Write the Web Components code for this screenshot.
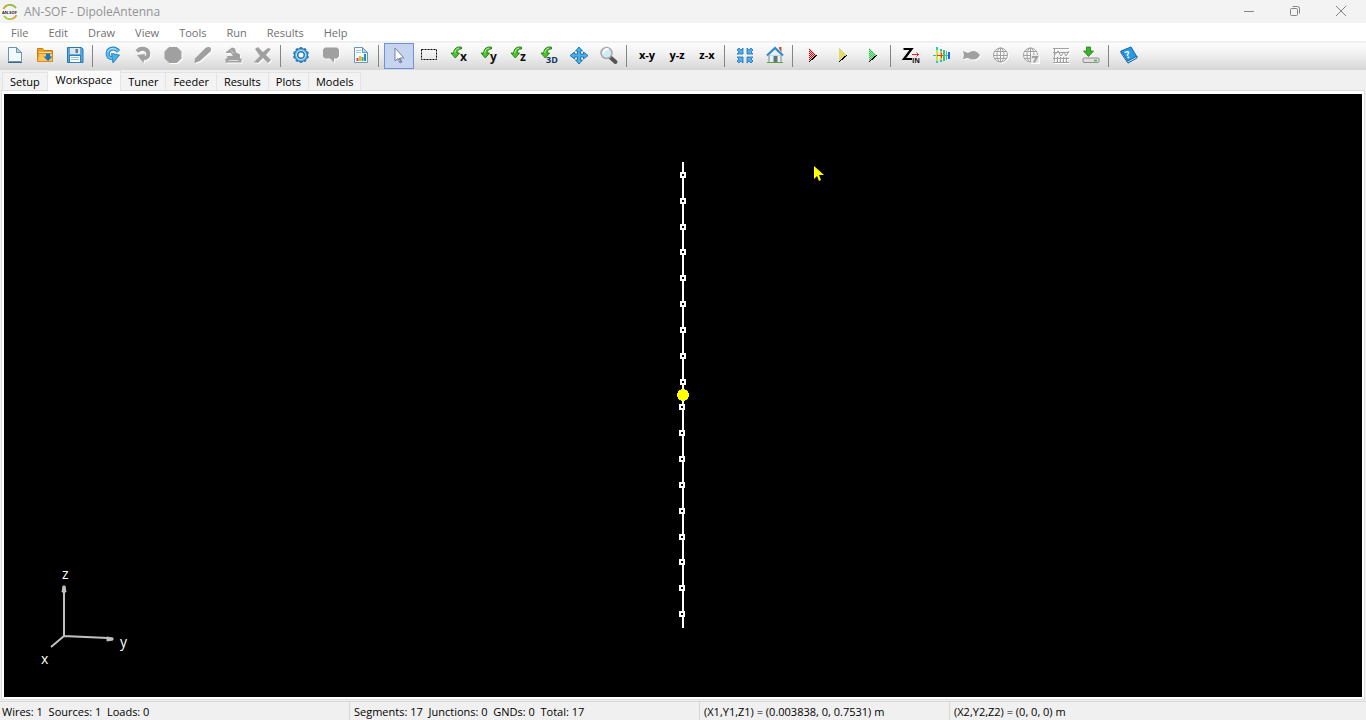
<!DOCTYPE html>
<html lang="en">
<head>
<meta charset="utf-8">
<title>AN-SOF - DipoleAntenna</title>
<style>
html, body { height: 100%; margin: 0; }
body { background: #f0f0f0; font-family: "Open Sans", "Noto Sans", sans-serif; }
</style>
</head>
<body>
<ansof-app></ansof-app>
<script>
const define = (name, html, setup) => {
  const template = document.createElement('template');
  template.innerHTML = html;
  customElements.define(name, class extends HTMLElement {
    constructor() {
      super();
      this.attachShadow({ mode: 'open' }).append(template.content.cloneNode(true));
    }
    connectedCallback() { if (setup) setup(this, this.shadowRoot); }
  });
};

const rotate = `<path d="M12.500 2.200C8 1.200 4.800 3.600 4.700 8H2l4.300 5L10.500 8H8c.2-2.700 1.800-4.200 4.500-4Z" fill="#48c62c" stroke="#20790f" stroke-width=".9"/><path d="M5.800 8C6 5 7.500 3.500 10 3.100" stroke="#b2f194" fill="none"/>`;
const axisText = t => `${rotate}<text x="11" y="16" fill="#111" font-family="Open Sans" font-weight="700" font-size="12">${t}</text>`;
const play = (id, color) => `<g shape-rendering="crispEdges"><defs><pattern id="${id}" width="2" height="2" patternUnits="userSpaceOnUse"><rect width="2" height="2" fill="#d0d0d0"/><path d="M0 0h1v1H0zM1 1h1v1H1z" fill="${color}"/></pattern></defs><path d="M6 3l8 7-8 7z" fill="url(#${id})"/><path d="M14 10l-8 7" stroke="#000"/></g>`;
const globe = `<circle cx="9.500" cy="10" r="7" fill="none" stroke="#a0a0a0"/><ellipse cx="9.500" cy="10" rx="3.500" ry="7" fill="none" stroke="#a0a0a0"/><path d="M9.500 3v14M2.500 10.500h14M3.500 6.500h12M3.500 13.500h12" stroke="#a0a0a0"/>`;
const gearTeeth = Array.from({ length: 10 }, (_, i) => `<rect x="8.500" y="2" width="3" height="4" rx="1" fill="#2c80c4" transform="rotate(${i * 36} 10 10)"/>`).join('');

const icons = {
  new: `<path d="M3.500 2.500h8l5 5v9h-13z" fill="#f1f8fe" stroke="#6f93ab"/><path d="M11.500 2.500v5h5z" fill="#b7d5e8" stroke="#6f93ab"/><path d="M3 17.500h14" stroke="#45677d"/>`,
  open: `<path d="M2.500 3.500h5l2 2h8v11h-15z" fill="#eda024" stroke="#c97d11"/><path d="M4 7.500h12v2" stroke="#ffe2a0" fill="none"/><path d="M2.500 16.500l1-8h14v8z" fill="#ffc459" stroke="#d98d1d"/><path d="M11 8.500h4v3h2.500l-4.500 4.500-4.500-4.500H11z" fill="#1678c5"/>`,
  save: `<path d="M2.500 2.500h14l1.500 1.500v13.500H2.500z" fill="#55a8de" stroke="#2878b0"/><rect x="5" y="3" width="10" height="6" fill="#dfe6ea"/><rect x="10.500" y="4" width="2.500" height="4" fill="#637d8c"/><rect x="4.500" y="10.500" width="11" height="7" fill="#f5fbff" stroke="#3780b2"/><path d="M6 12.500h8M6 14.500h8" stroke="#9fc0d3"/>`,
  undo: `<path d="M15.500 6.500C11.500 1.500 4.500 3.500 4.700 9c.1 2.500 1.800 4 4.300 4.300" stroke="#1f7fc2" stroke-width="4"/><path d="M8.500 8.500l8 1.500-6.500 8z" fill="#4bafe8" stroke="#1772b0" stroke-width=".8"/><path d="M15.500 6.500C11.500 1.500 4.500 3.500 4.700 9c.1 2.500 1.800 4 4.300 4.300" stroke="#5cbbee" stroke-width="2.400"/><path d="M4.500 7c1-3 5-4.500 8.500-2.500" stroke="#c3edff"/>`,
  redo: `<path d="M4 6.500C8 2 15.500 3.500 15.300 9.500c-.1 2-1.800 3.500-4.300 4" stroke="#a0a0a0" stroke-width="4"/><path d="M12 9l-8 1 6.500 8z" fill="#a0a0a0"/>`,
  stop: `<path d="M6 2.500h8l4 4v7l-4 4H6l-4-4v-7z" fill="#a0a0a0" stroke="#a0a0a0" stroke-linejoin="round"/>`,
  pencil: `<path d="M2 13.500L13 2.500q3-1 4.500 0 1 2 0 4L7 16l-5 2-.5-1z" fill="#a0a0a0"/>`,
  stamp: `<path d="M3 7l6-4.500 3 1 1 4 4 2v4h1.500v4h-16v-4h2L4 11h6L8 8H3z" fill="#a0a0a0"/><path d="M5.500 15.500h10M8 5.500l3 3" stroke="#ddd"/>`,
  cross: `<path d="M2 4l3-2 5 5 5-4 3 1-5 6 5 5-3 3-5-5-5 5-4-1 6-6z" fill="#a0a0a0"/>`,
  gear: `${gearTeeth}<circle cx="10" cy="10" r="6.500" fill="#6bbbe9" stroke="#216fab"/><circle cx="10" cy="10" r="4.500" fill="#2a75b2" stroke="#c1e8fa"/><circle cx="10" cy="10" r="2.500" fill="#f6fbff"/>`,
  chat: `<path d="M4 2.500h12l2 2v7l-2 2h-3v4l-4-4H4l-2-2v-7z" fill="#a0a0a0"/>`,
  report: `<path d="M3.500 2.500h8l5 5v10h-13z" fill="#f6fbff" stroke="#6a97b7"/><path d="M11.500 2.500v5h5z" fill="#b7dcef" stroke="#6a97b7"/><path d="M5 5.500h5M5 7.500h5" stroke="#98cce5"/><path d="M6.500 13v3" stroke="#e73f2d" stroke-width="2"/><path d="M9 11v5" stroke="#f1af29" stroke-width="2"/><path d="M11.500 12v4" stroke="#47af44" stroke-width="2"/><path d="M14 9v7" stroke="#238ad0" stroke-width="2"/>`,
  select: `<path d="M6 3v13l3-2.500 2 4.500 2-1-2-4h4z" fill="#fff" stroke="#70849a"/><path d="M10 13l2 4" stroke="#56708a"/>`,
  box: `<rect x="2.500" y="4.500" width="15" height="10" fill="none" stroke="#000" stroke-dasharray="2 1"/>`,
  rx: axisText('x'), ry: axisText('y'), rz: axisText('z'),
  r3: `${rotate}<text x="7" y="18" fill="#123759" font-family="Open Sans" font-weight="700" font-size="9">3D</text>`,
  move: `<path d="M10 2l3.500 4H11.500v3h3V7L19 10.500 14.500 14v-2h-3v3h2L10 19l-3.500-4h2v-3h-3v2L1 10.500 5.500 7v2h3V6h-2z" fill="#4aaee9" stroke="#1b6ead" stroke-width=".9"/>`,
  zoom: `<path d="M11.500 12.500l5 4.500" stroke="#555" stroke-width="4" stroke-linecap="round"/><circle cx="7.500" cy="8" r="5.500" fill="#cdebf5" stroke="#a8a8a8" stroke-width="1.500"/><path d="M4.500 8.500c0-3 2-4.500 5-4.500" fill="none" stroke="#fff" stroke-width="2"/>`,
  fit: `<path d="M2 5l2-2 2 2 2-2v6H2l2-2zM18 5l-2-2-2 2-2-2v6h6l-2-2zM2 16l2 2 2-2 2 2v-6H2l2 2zM18 16l-2 2-2-2-2 2v-6h6l-2 2z" fill="#4cb0eb" stroke="#2070b0" stroke-width=".8"/>`,
  home: `<path d="M14 3.500V2h2.500v5.500" fill="#bb5740"/><path d="M4 10h12v7.500H4z" fill="#e8f0f4" stroke="#6e8ca1"/><path d="M2 10.500L10 3l8 7.500" fill="#e8f0f4" stroke="#2c8acb" stroke-width="2.200"/><path d="M8.500 11h4v6.500h-4z" fill="#66727b"/><path d="M2 17.500h16" stroke="#5ba53d"/>`,
  red: play('playRed', '#f00000'), yellow: play('playYellow', '#f5e800'), green: play('playGreen', '#00df22'),
  zin: `<path d="M2.500 4h8L3 14h8" fill="none" stroke="#000" stroke-width="2.200"/><path d="M11 9.500h7M15.500 7.500l2 2-2 2" stroke="#e52222" fill="none"/><text x="11" y="18" fill="#111" font-family="Open Sans" font-weight="700" font-size="7">IN</text>`,
  pattern: `<g shape-rendering="crispEdges" stroke-width="2"><path d="M2 10.500h17" stroke="#20bce0" stroke-width="1"/><path d="M6 2v16" stroke="#22c8e0"/><path d="M6 5v11" stroke="#c8e828"/><path d="M10 4v13" stroke="#1fb8dd"/><path d="M10 6v9" stroke="#f3c428"/><path d="M10 8v5M6 10.500h7" stroke="#f03a29" stroke-width="1"/><path d="M13 5v11" stroke="#35c86a"/><path d="M15.500 6v9" stroke="#30c4c0" stroke-width="1"/><path d="M18 7v7" stroke="#2664e0"/></g>`,
  fish: `<path d="M2 6l5 2q6-4 10 0l2 2-2 3q-5 3-10 0l-5 1 1-4z" fill="#a0a0a0"/>`,
  globe: globe,
  globe2: `${globe}<path d="M10 10h8v8h-8z" fill="#e8e8e8"/><path d="M11 12h5l-3 5.500" fill="none" stroke="#a0a0a0" stroke-width="2"/>`,
  spectrum: `<path d="M2 3.500h16M2 7.500h16M2 13.500h16M2 17.500h16" stroke="#a0a0a0"/><path d="M3.500 4v12M6.500 12v6M9.500 12v6M12.500 12v6M15.500 12v6M3 11l4-5 3 5 3-4 2 4 3-5" stroke="#a0a0a0" fill="none"/>`,
  download: `<path d="M3.500 10l-2 3h17l-2-3z" fill="#eee"/><rect x="2" y="13" width="16" height="4.500" rx="1" fill="#ddd" stroke="#8f8f8f"/><path d="M13 15.500h3" stroke="#38bd3a" stroke-width="1.500"/><path d="M5.500 2h4v4h3l-5 5.500-5-5.500h3z" fill="#39b42a" stroke="#217c18" stroke-width=".8"/>`,
  help: `<path d="M2 6l10-4 6 10-9 6z" fill="#279be8" stroke="#1464a6"/><path d="M2 6v2l7 10 9-5v-2l-9 5z" fill="#d6e5ed" stroke="#1464a6"/><text x="6" y="13" fill="#fff" font-family="Open Sans" font-weight="700" font-size="10" transform="rotate(-20 9 9)">?</text>`
};

define('tool-button', `
<style>
:host { display: block; flex: none; }
button { box-sizing: border-box; width: 30px; height: 26px; padding: 0 0 2px; border: 1px solid transparent; background: none; display: flex; align-items: center; justify-content: center; color: #000; font: 700 11px/16px "Open Sans", sans-serif; }
svg { display: block; width: 20px; height: 20px; }
:host([selected]) button { background: #c7d4ef; border-color: #6f94d3; }
:host([disabled]) svg { filter: drop-shadow(1px 1px 0 #fff); }
</style>
<button type="button"></button>`, (host, root) => {
  const button = root.querySelector('button');
  const icon = host.getAttribute('icon');
  button.disabled = host.hasAttribute('disabled');
  button.title = host.getAttribute('label');
  if (icon) button.innerHTML = `<svg viewBox="0 0 20 20" fill="none" aria-hidden="true">${icons[icon]}</svg>`;
  else button.textContent = host.getAttribute('label');
});

define('tool-separator', `
<style>
:host { display: block; flex: none; width: 8px; height: 22px; padding-top: 2px; }
i { display: block; width: 1px; height: 100%; margin-left: 2px; background: #858585; }
</style><i></i>`);

define('title-bar', `
<style>
:host { display: flex; align-items: center; height: 23px; background: #f3f3f3; color: #929292; padding: 0 2px; font-size: 12px; }
.logo { width: 16px; height: 16px; margin-right: 6px; }
h1 { flex: 1; margin: 0; font: inherit; line-height: 23px; }
button { width: 46px; height: 23px; padding: 0; border: 0; background: none; display: flex; align-items: center; justify-content: center; }
button svg { width: 12px; height: 12px; margin-bottom: 2px; fill: none; stroke: #858585; }
</style>
<svg class="logo" viewBox="0 0 16 16" aria-hidden="true"><path d="M1.500 5A7 6.500 0 0 1 14 4" fill="none" stroke="#8fbd36" stroke-width="1.800"/><path d="M14.500 11A7 6.500 0 0 1 2 12" fill="none" stroke="#a5c93b" stroke-width="1.800"/><path d="M2 4.500q1-2 3-3M14 11.500q-1 2-3 3" stroke="#ef9d2b" stroke-width="1.500" fill="none"/><text x="0" y="10" font-family="Open Sans" font-size="4" font-weight="700" fill="#222">AN-SOF</text></svg>
<h1><slot></slot></h1>
<button type="button" aria-label="Minimize"><svg viewBox="0 0 12 12"><path d="M1 6.500h10"/></svg></button>
<button type="button" aria-label="Restore"><svg viewBox="0 0 12 12"><rect x="1.500" y="3.500" width="7" height="7" rx="1"/><path d="M3.500 1.500h5q2 0 2 2v5"/></svg></button>
<button type="button" aria-label="Close"><svg viewBox="0 0 12 12"><path d="M1 1l10 10M11 1L1 11"/></svg></button>`);

define('menu-item', `
<style>
:host { display: flex; }
button { box-sizing: border-box; padding: 1px 10px 0; height: 18px; border: 0; background: none; color: #707070; font: 11px/17px "Open Sans", sans-serif; }
</style><button type="button"><slot></slot></button>`);

define('menu-strip', `
<style>
:host { display: flex; height: 18px; padding-left: 1px; background: #fff; border-bottom: 2px solid #f0f0f0; }
</style><slot></slot>`);

define('tool-bar', `
<style>
:host { display: flex; align-items: flex-start; height: 27px; background: linear-gradient(#fdfdfd, #f1f1f1 40%, #d6d6d6); }
</style><slot></slot>`);

define('tab-item', `
<style>
:host { display: flex; }
button { box-sizing: border-box; height: 18px; padding: 1px 7px 0; border: 1px solid #e3e3e3; border-width: 1px 1px 0 0; background: #f3f3f3; color: #000; font: 11px/16px "Open Sans", sans-serif; }
:host(:first-child) button { border-left-width: 1px; }
:host([selected]) { margin-bottom: -1px; z-index: 1; }
:host([selected]) button { height: 21px; padding: 0 8px 3px; background: #fbfbfb; }
</style><button type="button" role="tab"><slot></slot></button>`, (host, root) => {
  root.querySelector('button').setAttribute('aria-selected', host.hasAttribute('selected'));
});

define('tab-strip', `
<style>
:host { display: flex; align-items: flex-end; height: 20px; padding-left: 2px; }
</style><slot></slot>`);

define('dipole-wire', `
<style>
:host { display: block; }
svg { display: block; }
</style>
<svg width="14" height="467" viewBox="0 0 14 467" role="img" aria-label="Dipole wire" shape-rendering="crispEdges">
<path d="M6 0h2v466H6z" fill="#fff"/><g></g><circle cx="7" cy="233" r="6" fill="#ff0"/></svg>`, (host, root) => {
  const nodes = [13, 39, 65, 90, 116, 142, 168, 194, 220, 245, 271, 297, 323, 349, 375, 400, 426, 452];
  root.querySelector('g').innerHTML = nodes.map((y, i) => {
    const x = i < 9 ? 5 : 4;
    return `<rect x="${x}" y="${y - 2}" width="4" height="4" fill="#000" stroke="#fff" stroke-width="2"/>`;
  }).join('');
});

define('axes-gizmo', `
<style>
:host { display: block; }
svg { display: block; font: 14px "Open Sans", sans-serif; }
</style>
<svg width="100" height="112" viewBox="0 -8 100 112" role="img" aria-label="Coordinate axes">
<g fill="none" stroke="#c0c0c0" stroke-width="2"><path d="M30 22v48l44 2M30 70l-13 11"/></g>
<path d="M28 26l1-6h2l1 6zM73 71l6 1v2l-6 1z" fill="#c0c0c0" stroke="#c0c0c0"/>
<g fill="#fff"><text x="28" y="13">z</text><text x="86" y="81">y</text><text x="7" y="98">x</text></g></svg>`);

define('work-space', `
<style>
:host { display: flex; flex: 1; min-height: 0; margin: 0 1px; border: 1px solid #dedede; padding: 3px 2px 2px; background: #fff; }
.view { position: relative; flex: 1; display: flex; align-items: center; justify-content: center; background: #000; }
axes-gizmo { position: absolute; left: 30px; bottom: 27px; }
.pointer { position: absolute; left: calc(50% + 130px); top: 71px; width: 12px; height: 18px; }
</style>
<div class="view">
<dipole-wire></dipole-wire>
<axes-gizmo></axes-gizmo>
<svg class="pointer" viewBox="0 0 12 18" aria-hidden="true"><path d="M1 1v13l3-3 2 5 2-1-2-5h5z" fill="#ff0"/></svg>
</div>`);

define('status-bar', `
<style>
:host { display: grid; grid-template-columns: 350px 350px 250px 1fr; height: 18px; margin-top: 1px; border-top: 1px solid #d7d7d7; color: #000; font-size: 11px; line-height: 20px; }
::slotted(span) { box-sizing: border-box; padding-left: 4px; border-right: 1px solid #d7d7d7; white-space: pre; }
::slotted(span:first-child) { padding-left: 2px; }
::slotted(span:last-child) { border-right: 0; }
</style><slot></slot>`);

const separator = '<tool-separator></tool-separator>';
const tools = [
  ['new', 'New'], ['open', 'Open'], ['save', 'Save'], null,
  ['undo', 'Undo'], ['redo', 'Redo', 'disabled'], ['stop', 'Source / Load', 'disabled'], ['pencil', 'Modify', 'disabled'], ['stamp', 'Wire Color', 'disabled'], ['cross', 'Delete', 'disabled'], null,
  ['gear', 'Preferences'], ['chat', 'Comments', 'disabled'], ['report', 'Report'], null,
  ['select', 'Select', 'selected'], ['box', 'Selection Box'], ['rx', 'Rotate x'], ['ry', 'Rotate y'], ['rz', 'Rotate z'], ['r3', 'Rotate 3D'], ['move', 'Move'], ['zoom', 'Zoom'], null,
  ['', 'x-y'], ['', 'y-z'], ['', 'z-x'], null,
  ['fit', 'Center'], ['home', 'Initial View'], null,
  ['red', 'Run All'], ['yellow', 'Run Currents'], ['green', 'Run Fields'], null,
  ['zin', 'Input Impedance'], ['pattern', 'Currents'], ['fish', 'Near Field', 'disabled'], ['globe', 'Far Field', 'disabled'], ['globe2', 'Far Field 2D', 'disabled'], ['spectrum', 'Spectrum', 'disabled'], ['download', 'Export'], null,
  ['help', 'Help']
].map(t => t ? `<tool-button icon="${t[0]}" label="${t[1]}" ${t[2] || ''}></tool-button>` : separator).join('');

define('ansof-app', `
<style>
:host { display: flex; flex-direction: column; height: 100vh; min-height: 600px; overflow: hidden; }
</style>
<title-bar>AN-SOF - DipoleAntenna</title-bar>
<menu-strip>${['File', 'Edit', 'Draw', 'View', 'Tools', 'Run', 'Results', 'Help'].map(m => `<menu-item>${m}</menu-item>`).join('')}</menu-strip>
<tool-bar role="toolbar">${tools}</tool-bar>
<tab-strip role="tablist">${['Setup', 'Workspace', 'Tuner', 'Feeder', 'Results', 'Plots', 'Models'].map(t => `<tab-item ${t === 'Workspace' ? 'selected' : ''}>${t}</tab-item>`).join('')}</tab-strip>
<work-space></work-space>
<status-bar><span>Wires: 1  Sources: 1  Loads: 0</span><span>Segments: 17  Junctions: 0  GNDs: 0  Total: 17</span><span>(X1,Y1,Z1) = (0.003838, 0, 0.7531) m</span><span>(X2,Y2,Z2) = (0, 0, 0) m</span></status-bar>`);
</script>
</body>
</html>
